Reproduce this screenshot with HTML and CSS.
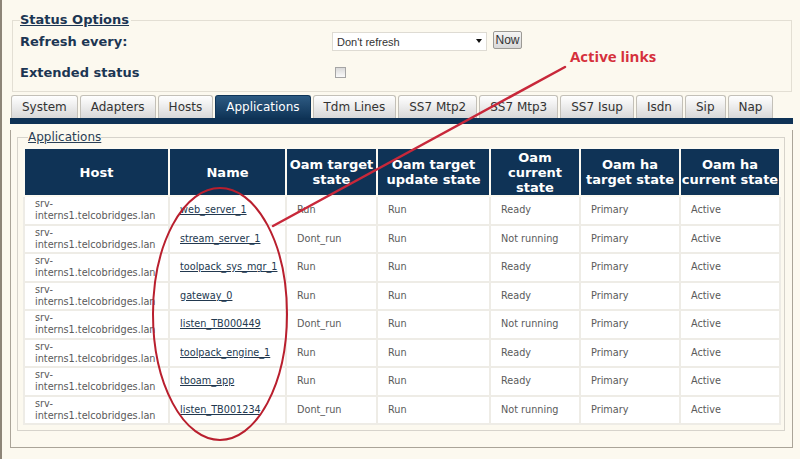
FILE: index.html
```
<!DOCTYPE html>
<html lang="en">
<head>
  <meta charset="UTF-8" />
  <title>Status - Applications</title>
  <link rel="stylesheet" href="styles.css">
</head>
<body>
  <div class="page">
    <fieldset class="options">
      <legend>Status Options</legend>
      <div class="opt-grid">
        <label>Refresh every:</label>
        <div class="opt-ctrl">
          <span class="select-wrap">
            <select class="refresh">
              <option>Don't refresh</option>
              <option>5 seconds</option>
              <option>30 seconds</option>
            </select>
          </span>
          <button class="now">Now</button>
        </div>
        <label>Extended status</label>
        <div class="opt-ctrl">
          <input type="checkbox" class="check">
        </div>
      </div>
    </fieldset>

    <ul class="tabs">
      <li>System</li>
      <li>Adapters</li>
      <li>Hosts</li>
      <li class="active">Applications</li>
      <li>Tdm Lines</li>
      <li>SS7 Mtp2</li>
      <li>SS7 Mtp3</li>
      <li>SS7 Isup</li>
      <li>Isdn</li>
      <li>Sip</li>
      <li>Nap</li>
    </ul>
    <div class="tab-bar"></div>

    <div class="panel">
      <fieldset class="apps">
        <legend>Applications</legend>
        <table class="app-table">
          <colgroup>
            <col class="c-host">
            <col class="c-name">
            <col class="c-target">
            <col class="c-update">
            <col class="c-current">
            <col class="c-hatarget">
            <col class="c-hacurrent">
          </colgroup>
          <thead>
            <tr>
              <th>Host</th>
              <th>Name</th>
              <th>Oam target<br>state</th>
              <th>Oam target<br>update state</th>
              <th>Oam<br>current<br>state</th>
              <th>Oam ha<br>target state</th>
              <th>Oam ha<br>current state</th>
            </tr>
          </thead>
          <tbody>
            <tr>
              <td>srv-interns1.telcobridges.lan</td>
              <td><a href="#">web_server_1</a></td>
              <td>Run</td><td>Run</td><td>Ready</td><td>Primary</td><td>Active</td>
            </tr>
            <tr>
              <td>srv-interns1.telcobridges.lan</td>
              <td><a href="#">stream_server_1</a></td>
              <td>Dont_run</td><td>Run</td><td>Not running</td><td>Primary</td><td>Active</td>
            </tr>
            <tr>
              <td>srv-interns1.telcobridges.lan</td>
              <td><a href="#">toolpack_sys_mgr_1</a></td>
              <td>Run</td><td>Run</td><td>Ready</td><td>Primary</td><td>Active</td>
            </tr>
            <tr>
              <td>srv-interns1.telcobridges.lan</td>
              <td><a href="#">gateway_0</a></td>
              <td>Run</td><td>Run</td><td>Ready</td><td>Primary</td><td>Active</td>
            </tr>
            <tr>
              <td>srv-interns1.telcobridges.lan</td>
              <td><a href="#">listen_TB000449</a></td>
              <td>Dont_run</td><td>Run</td><td>Not running</td><td>Primary</td><td>Active</td>
            </tr>
            <tr>
              <td>srv-interns1.telcobridges.lan</td>
              <td><a href="#">toolpack_engine_1</a></td>
              <td>Run</td><td>Run</td><td>Ready</td><td>Primary</td><td>Active</td>
            </tr>
            <tr>
              <td>srv-interns1.telcobridges.lan</td>
              <td><a href="#">tboam_app</a></td>
              <td>Run</td><td>Run</td><td>Ready</td><td>Primary</td><td>Active</td>
            </tr>
            <tr>
              <td>srv-interns1.telcobridges.lan</td>
              <td><a href="#">listen_TB001234</a></td>
              <td>Dont_run</td><td>Run</td><td>Not running</td><td>Primary</td><td>Active</td>
            </tr>
          </tbody>
        </table>
      </fieldset>
    </div>
  </div>

  <!-- annotation drawn over the screenshot -->
  <svg class="notes" width="800" height="459" viewBox="0 0 800 459">
    <line x1="565" y1="67" x2="273" y2="226" stroke="#c8283a" stroke-width="2.5" stroke-linecap="round" />
    <ellipse cx="220" cy="314" rx="67" ry="126" fill="none" stroke="#b91f2e" stroke-width="2" />
    <text x="570" y="62" class="note-text">Active links</text>
  </svg>
</body>
</html>
```

FILE: styles.css
```
* {
  box-sizing: border-box;
}
body {
  margin: 0;
  min-height: 100vh;
  padding-left: 8px;
  border-left: 2px solid #8d8578;
  background: #fcf9ef;
  font-family: "DejaVu Sans", Verdana, sans-serif;
  color: #333;
}
.page {
  width: 783px;
}

/* status options */
.options {
  margin: 12px 1px 0 2px;
  padding: 2px 8px 8px 7px;
  border: 1px solid #e3dfd4;
  min-width: 0;
}
.options legend {
  padding: 0 2px 0 0;
  font-weight: bold;
  font-size: 13px;
  line-height: 16px;
  color: #1c3653;
  text-decoration: underline;
}
.opt-grid {
  display: grid;
  grid-template-columns: 312px auto;
  grid-auto-rows: 22px;
  row-gap: 9px;
  align-items: center;
}
.opt-grid label {
  font-weight: bold;
  font-size: 13px;
  color: #1c3653;
}
.opt-ctrl {
  display: flex;
  align-items: center;
}
.select-wrap {
  position: relative;
  display: inline-block;
}
.select-wrap::after {
  content: "";
  position: absolute;
  right: 5px;
  top: 8px;
  border-left: 3px solid transparent;
  border-right: 3px solid transparent;
  border-top: 4px solid #111;
}
.refresh {
  appearance: none;
  width: 155px;
  height: 19px;
  padding: 0 0 0 4px;
  border: 1px solid #dedbd3;
  border-radius: 0;
  background: #fff;
  font-family: "Liberation Sans", Arial, sans-serif;
  font-size: 11px;
  color: #333;
  outline: none;
}
.now {
  width: 29px;
  height: 18px;
  margin: -2px 0 0 6px;
  padding: 0;
  border: 1px solid #9c9a95;
  border-radius: 2px;
  background: linear-gradient(#f5f5f5, #d8d8d8);
  font-family: "Liberation Sans", Arial, sans-serif;
  font-size: 12px;
  color: #333;
}
.check {
  appearance: none;
  width: 11px;
  height: 11px;
  margin: 0 0 0 3px;
  border: 1px solid #a5a5a5;
  background: linear-gradient(#dadada, #fafafa);
}

/* tabs */
.tabs {
  list-style: none;
  margin: 3px 0 0;
  padding: 0 0 0 1px;
  display: flex;
  gap: 2px;
}
.tabs li {
  flex: none;
  height: 23px;
  line-height: 22px;
  padding: 0 10px;
  border: 1px solid #c3c0b8;
  border-bottom: none;
  border-radius: 3px 3px 0 0;
  background: linear-gradient(#ffffff, #d8d8d8);
  font-size: 12px;
  color: #333;
  white-space: nowrap;
}
.tabs li.active {
  background: linear-gradient(#2d5a82, #0f3457);
  border-color: #0f3457;
  color: #fff;
}
.tab-bar {
  height: 6px;
  background: #0e3255;
}
.panel {
  border: 1px solid #aaa498;
  border-top: none;
}

/* applications table */
.apps {
  margin: 6px 7px 16px 6px;
  padding: 3px 5px 5px;
  border: 1px solid #d6d3cb;
  min-width: 0;
}
.apps legend {
  margin-left: 5px;
  padding: 0;
  font-size: 12px;
  line-height: 14px;
  color: #2a3f55;
  text-decoration: underline;
}
.app-table {
  width: 756px;
  table-layout: fixed;
  border-collapse: collapse;
  font-size: 9.7px;
}
.c-host { width: 145px; }
.c-name { width: 117px; }
.c-target { width: 91px; }
.c-update { width: 113px; }
.c-current { width: 90px; }
.c-hatarget { width: 100px; }
.c-hacurrent { width: 100px; }
.app-table th {
  height: 48px;
  padding: 0;
  border: 2px solid #fcfaf2;
  background: #0f3356;
  color: #fff;
  font-size: 13px;
  line-height: 15px;
  white-space: nowrap;
  text-align: center;
}
.app-table td {
  height: 28.5px;
  padding: 0 4px 0 10px;
  border: 2px solid #eeece6;
  background: #fff;
  color: #5a5a5a;
  line-height: 12px;
  vertical-align: middle;
}
.app-table td a {
  color: #22384f;
  text-decoration: underline;
}

/* red annotation */
.notes {
  position: absolute;
  top: 0;
  left: 0;
  pointer-events: none;
}
.note-text {
  font-family: "Open Sans", sans-serif;
  font-weight: bold;
  font-size: 15px;
  fill: #d5303c;
}
```
